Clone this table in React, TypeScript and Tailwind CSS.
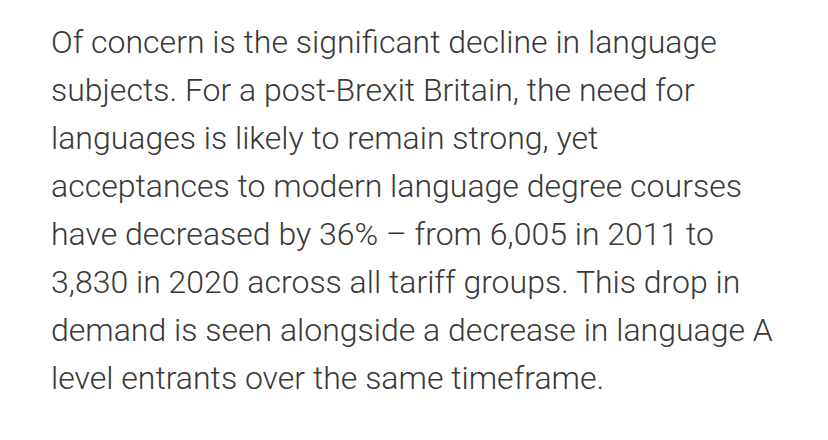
import React from "react";

export default function App() {
  return (
    <div className="w-[828px] h-[440px] bg-white overflow-hidden">
      <p
        className="ml-[51px] mt-[18px] w-[724px] text-[32px] leading-[48px] font-light text-[#383838]"
        style={{ fontFamily: "Roboto, 'Noto Sans', sans-serif" }}
      >
        Of concern is the significant decline in language subjects. For a post-Brexit Britain, the need for languages is likely to remain strong, yet acceptances to modern language degree courses have decreased by 36% – from 6,005 in 2011 to 3,830 in 2020 across all tariff groups. This drop in demand is seen alongside a decrease in language A level entrants over the same timeframe.
      </p>
    </div>
  );
}
